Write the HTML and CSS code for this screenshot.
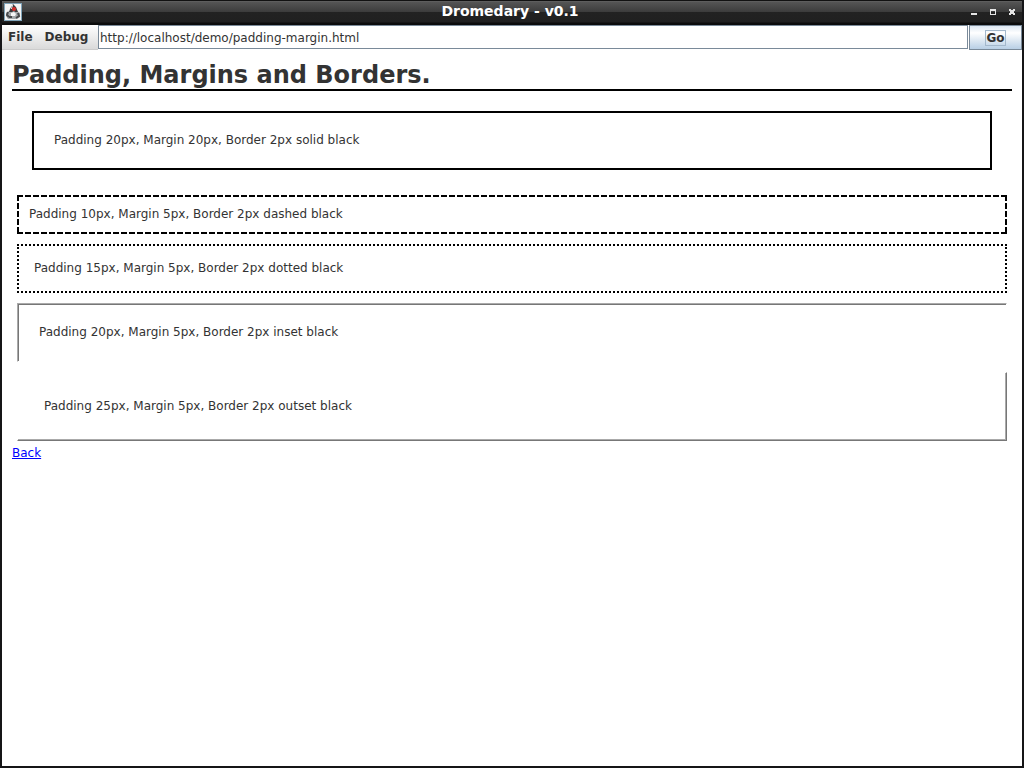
FILE: index.html
```html
<!DOCTYPE html>
<html lang="en">
<head>
  <meta charset="UTF-8" />
  <meta name="viewport" content="width=device-width, initial-scale=1" />
  <title>Dromedary - v0.1</title>
  <link rel="stylesheet" href="styles.css">
</head>
<body>
  <div class="window">
    <header class="titlebar">
      <svg class="app-icon" width="18" height="18" viewBox="0 0 18 18" aria-hidden="true">
        <rect x="0.5" y="0.5" width="17" height="17" fill="#f4f4f4" stroke="#7fa3b8" />
        <path d="M2 10 L5 8 L13 8 L16 10 V14 L13 16 H4 L2 13 Z" fill="#a4a8aa" />
        <path d="M9 1 L12 4 L14 9 L11 9 L10 8 L8 9 L5 9 L6 6 Z" fill="#3c3c3e" />
        <path d="M4 9 L3 12 L5 14 M14 10 L15 13 L12 15 M5 14 H8" fill="none" stroke="#48494b" stroke-width="2" />
        <path d="M7 10 L10 9 L12 11 L11 13 H7 Z" fill="#f6f6f6" />
        <path d="M8 2 L9 2 L8 6 L7 6 Z" fill="#f0f0f0" />
        <circle cx="10" cy="6" r="2" fill="#d82e2a" />
      </svg>
      <span class="title">Dromedary - v0.1</span>
      <div class="window-buttons">
        <button type="button" aria-label="Minimize"><svg width="7" height="7" viewBox="0 0 7 7" shape-rendering="crispEdges"><path d="M0 5h6v2h-6z" fill="#e4e4e4" /></svg></button>
        <button type="button" aria-label="Maximize"><svg width="7" height="7" viewBox="0 0 7 7" shape-rendering="crispEdges"><path d="M0 1h6v6h-6zM1 3v3h4v-3z" fill="#e4e4e4" fill-rule="evenodd" /></svg></button>
        <button type="button" aria-label="Close"><svg width="7" height="7" viewBox="0 0 7 7" shape-rendering="crispEdges"><path d="M0 1h2v1h2v-1h2v2h-1v2h1v2h-2v-1h-2v1h-2v-2h1v-2h-1z" fill="#e4e4e4" /></svg></button>
      </div>
    </header>

    <form class="toolbar">
      <nav class="menu">
        <button type="button">File</button>
        <button type="button">Debug</button>
      </nav>
      <input type="text" class="address" aria-label="Address" value="http://localhost/demo/padding-margin.html" />
      <button type="button" class="go"><span>Go</span></button>
    </form>

    <main class="page">
      <h1>Padding, Margins and Borders.</h1>
      <div class="box solid">Padding 20px, Margin 20px, Border 2px solid black</div>
      <div class="box dashed">Padding 10px, Margin 5px, Border 2px dashed black</div>
      <div class="box dotted">Padding 15px, Margin 5px, Border 2px dotted black</div>
      <div class="box inset">Padding 20px, Margin 5px, Border 2px inset black</div>
      <div class="box outset">Padding 25px, Margin 5px, Border 2px outset black</div>
      <a href="#">Back</a>
    </main>
  </div>
</body>
</html>
```
FILE: styles.css
```css
* {
  box-sizing: border-box;
}

body {
  margin: 0;
  font-family: "DejaVu Sans", sans-serif;
  font-size: 12px;
  line-height: 15px;
  color: #333;
}

button, input {
  font-family: inherit;
  color: inherit;
}

.window {
  display: flex;
  flex-direction: column;
  min-height: 100vh;
  background-color: #fff;
  border: 2px solid #151517;
  border-top: none;
}

.titlebar {
  display: grid;
  grid-template-columns: 1fr auto 1fr;
  align-items: center;
  height: 25px;
  padding: 0 6px 2px 2px;
  background: linear-gradient(#111 0, #111 1px, #666 1px, #555 2px, #3c3c3c 12px, #222 12px, #202020 22px, #0c0c0c 23px);
  color: #fff;
}

.title {
  font-size: 14px;
  font-weight: bold;
}

.window-buttons {
  display: flex;
  justify-content: flex-end;
  gap: 12px;
}

.window-buttons button {
  display: block;
  padding: 0;
  border: none;
  background: none;
}

.window-buttons svg {
  display: block;
}

.toolbar {
  display: flex;
  height: 25px;
}

.menu {
  display: flex;
  min-width: 96px;
  background: linear-gradient(#fff, #dadada);
  border-bottom: 1px solid #ccc;
}

.menu button {
  padding: 0 6px;
  border: none;
  background: none;
  font-size: 12px;
  font-weight: bold;
}

.address {
  flex: 1;
  min-width: 0;
  height: 24px;
  padding: 1px 1px 0;
  border: 1px solid #7a8a99;
  border-radius: 0;
  font-size: 12px;
  outline: none;
}

.go {
  width: 53px;
  margin-left: 1px;
  padding: 0;
  border: 1px solid #7a8a99;
  background: linear-gradient(#dde8f3, #fff 30%, #b8cfe5);
  font-size: 12px;
  font-weight: bold;
}

.go span {
  display: inline-block;
  border: 1px solid #a3b8cc;
}

.page {
  flex: 1;
  padding: 10px;
}

h1 {
  margin: 0;
  padding-top: 1px;
  font-size: 24px;
  line-height: 28px;
  border-bottom: 2px solid #000;
}

.box {
  display: flow-root;
  margin: 10px 5px;
  border: 2px solid #000;
}

.solid {
  margin: 20px 20px 25px;
  padding: 20px;
}

/* 6px dashes with 2px gaps, tighter than the native dashed style */
.dashed {
  padding: 10px;
  border-color: transparent;
  background:
    repeating-linear-gradient(90deg, #000 0 6px, transparent 6px 8px) top / 100% 2px,
    repeating-linear-gradient(90deg, #000 0 6px, transparent 6px 8px) bottom / 100% 2px,
    repeating-linear-gradient(#000 0 6px, transparent 6px 8px) left / 2px 100%,
    repeating-linear-gradient(#000 0 6px, transparent 6px 8px) right / 2px 100%;
  background-repeat: no-repeat;
  background-origin: border-box;
}

.dotted {
  padding: 15px;
  border-style: dotted;
}

.inset {
  padding: 21px;
  border: 1px solid transparent;
  border-top-color: #aaa;
  border-left-color: #aaa;
  box-shadow: inset 1px 1px #777;
}

.outset {
  margin-bottom: 5px;
  padding: 26px;
  border: 1px solid transparent;
  border-right-color: #777;
  border-bottom-color: #777;
  box-shadow: inset -1px -1px #aaa;
}

a {
  color: #00f;
}
```
